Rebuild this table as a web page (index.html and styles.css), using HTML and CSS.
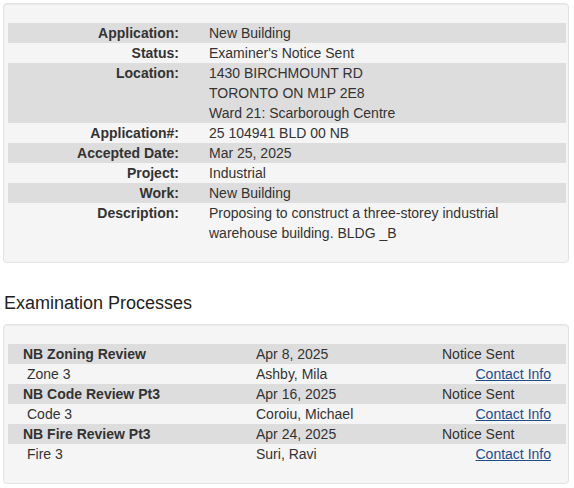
FILE: index.html
```
<!DOCTYPE html>
<html>
<head>
<meta charset="utf-8">
<link rel="stylesheet" href="styles.css">
</head>
<body>
<div class="well">
  <div class="info">
    <div class="row shade"><div class="lbl">Application:</div><div class="val">New Building</div></div>
    <div class="row"><div class="lbl">Status:</div><div class="val">Examiner's Notice Sent</div></div>
    <div class="row shade"><div class="lbl">Location:</div><div class="val">1430 BIRCHMOUNT RD<br>TORONTO ON M1P 2E8<br>Ward 21: Scarborough Centre</div></div>
    <div class="row"><div class="lbl">Application#:</div><div class="val">25 104941 BLD 00 NB</div></div>
    <div class="row shade"><div class="lbl">Accepted Date:</div><div class="val">Mar 25, 2025</div></div>
    <div class="row"><div class="lbl">Project:</div><div class="val">Industrial</div></div>
    <div class="row shade"><div class="lbl">Work:</div><div class="val">New Building</div></div>
    <div class="row"><div class="lbl">Description:</div><div class="val">Proposing to construct a three-storey industrial<br>warehouse building. BLDG _B</div></div>
  </div>
</div>
<h2 class="title">Examination Processes</h2>
<div class="well">
  <div class="procs">
    <div class="prow shade"><div class="name">NB Zoning Review</div><div class="c2">Apr 8, 2025</div><div class="c3">Notice Sent</div></div>
    <div class="prow"><div class="sub">Zone 3</div><div class="c2">Ashby, Mila</div><div class="c3 right"><a href="#">Contact Info</a></div></div>
    <div class="prow shade"><div class="name">NB Code Review Pt3</div><div class="c2">Apr 16, 2025</div><div class="c3">Notice Sent</div></div>
    <div class="prow"><div class="sub">Code 3</div><div class="c2">Coroiu, Michael</div><div class="c3 right"><a href="#">Contact Info</a></div></div>
    <div class="prow shade"><div class="name">NB Fire Review Pt3</div><div class="c2">Apr 24, 2025</div><div class="c3">Notice Sent</div></div>
    <div class="prow"><div class="sub">Fire 3</div><div class="c2">Suri, Ravi</div><div class="c3 right"><a href="#">Contact Info</a></div></div>
  </div>
</div>
</body>
</html>
```
FILE: styles.css
```
html, body {
  margin: 0;
  background: #fff;
}
body {
  padding: 3px 5px 0 3px;
  font-family: "Liberation Sans", Arial, sans-serif;
  font-size: 14px;
  line-height: 20px;
  color: #333;
}
.well {
  background: #f5f5f5;
  border: 1px solid #e3e3e3;
  border-radius: 4px;
  box-shadow: inset 0 1px 1px rgba(0,0,0,0.05);
  padding: 19px 2px 19px 4px;
}
.row {
  display: grid;
  grid-template-columns: 171px 1fr;
  column-gap: 30px;
}
.shade {
  background: #dddddd;
}
.lbl {
  font-weight: bold;
  text-align: right;
}
.title {
  font-size: 18px;
  font-weight: normal;
  line-height: 20px;
  margin: 0;
  padding: 30px 0 0 1px;
  height: 61px;
  box-sizing: border-box;
  color: #222;
}
.prow {
  display: grid;
  grid-template-columns: 233px 186px 1fr;
  padding: 0 15px;
}
.name {
  font-weight: bold;
}
.sub {
  padding-left: 4px;
}
.right {
  text-align: right;
}
a {
  color: #1f4e8c;
  text-decoration: underline;
}
```
